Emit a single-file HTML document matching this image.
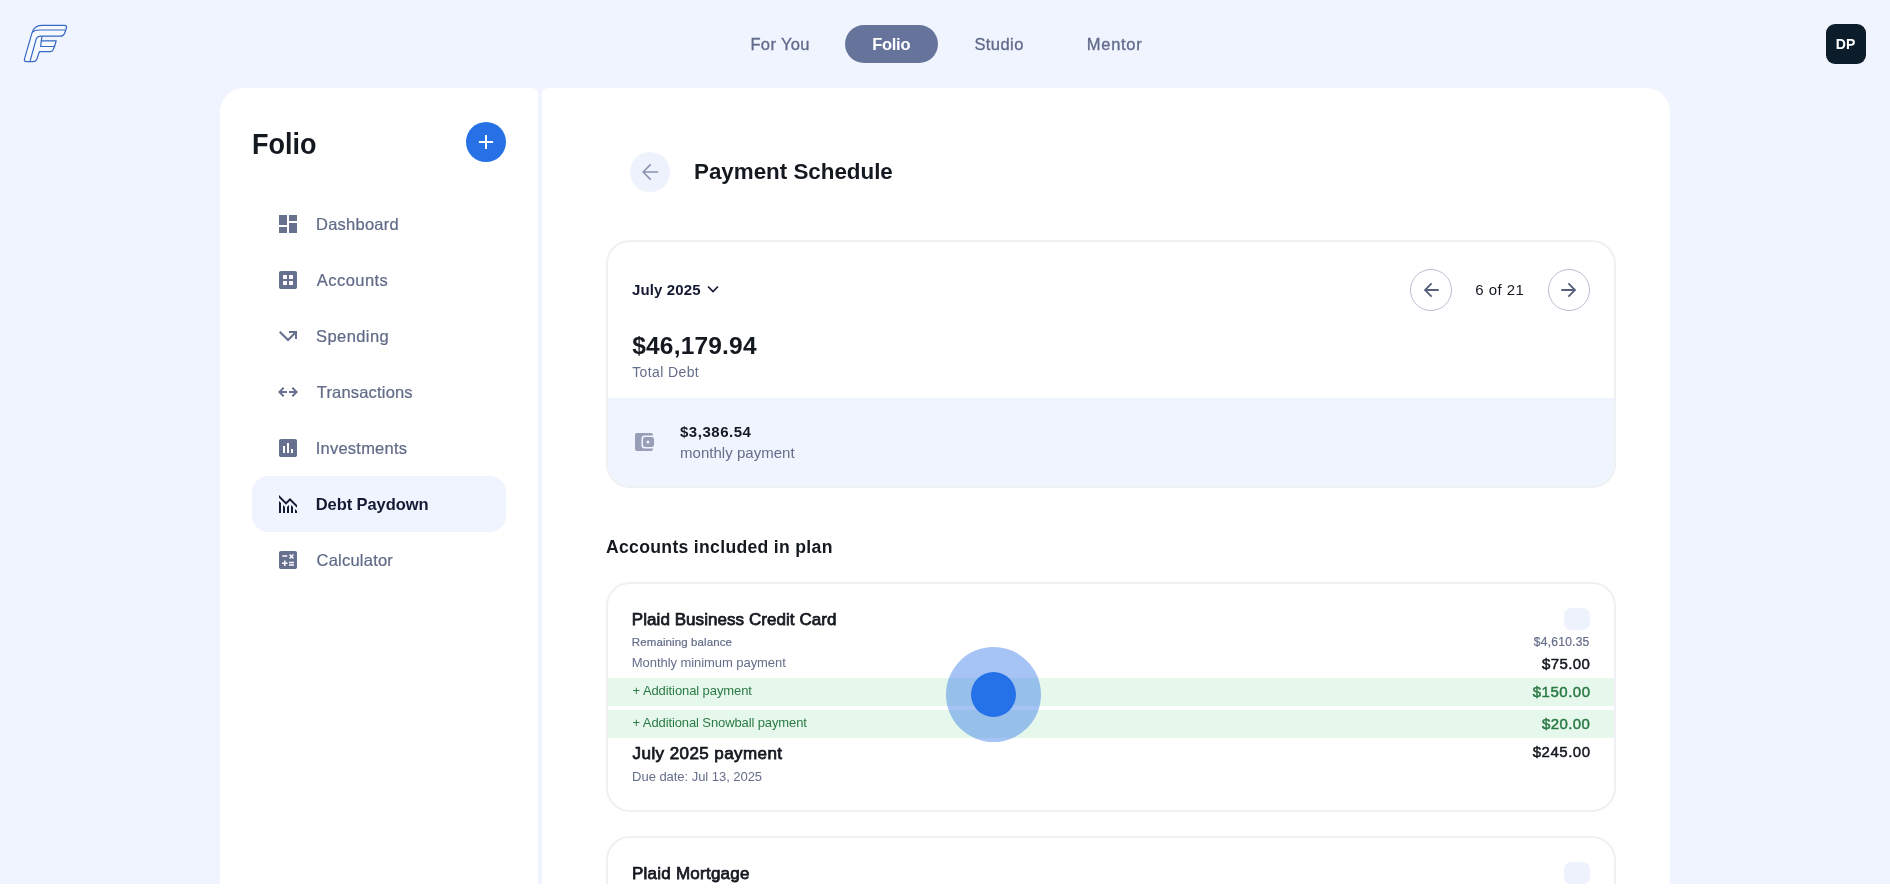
<!DOCTYPE html>
<html lang="en">
<head>
<meta charset="utf-8">
<title>Folio - Payment Schedule</title>
<style>
*{box-sizing:border-box;margin:0;padding:0}
html,body{width:1890px;height:896px;overflow:hidden;background:#fff}
body{font-family:"Liberation Sans",Arial,sans-serif;color:#14181f;position:relative}
#app{position:absolute;left:0;top:0;width:1890px;height:884px;background:#f0f4fe;overflow:hidden;will-change:transform}
.abs{position:absolute;white-space:nowrap;line-height:1}
/* top nav */
.tab{color:#606b8a;-webkit-text-stroke:.32px currentColor}
.tab.b{-webkit-text-stroke:0}
#avatar{position:absolute;left:1826px;top:24px;width:40px;height:40px;border-radius:9px;background:#0b1c2b;color:#fff}
/* panels */
#side{position:absolute;left:220px;top:88px;width:318px;height:820px;background:#fff;border-radius:24px 6px 0 0}
#main{position:absolute;left:542px;top:88px;width:1128px;height:820px;background:#fff;border-radius:6px 24px 0 0}
.nav{position:absolute;left:32px;width:254px;height:56px;border-radius:16px}
.nav.on{background:#f0f4fe}
.nav svg{position:absolute;left:24px;top:16px;width:24px;height:24px;fill:#67708f}
.nav.on svg{fill:#141a33}
.nav span{position:absolute;line-height:1;color:#616b88;white-space:nowrap;-webkit-text-stroke:.22px currentColor}
.nav.on span{color:#141a33;font-weight:700;-webkit-text-stroke:0}
.card{position:absolute;left:64px;width:1010px;border:2px solid #eef0f3;border-radius:24px;background:#fff;overflow:hidden}
.mut{color:#656e8a}
.grn{color:#2c7a45}
.b{font-weight:700}
.sb{font-weight:400;-webkit-text-stroke:.5px currentColor}
.sb3{font-weight:400;-webkit-text-stroke:1.25px currentColor}
.sb2{font-weight:400;-webkit-text-stroke:.75px currentColor}
.md{-webkit-text-stroke:.22px currentColor}
.r{right:24px}
.row{position:absolute;left:0;width:1006px;height:28px;background:#e6f8ec}
</style>
</head>
<body>
<div id="app">
  <!-- logo -->
  <svg class="abs" style="left:0;top:0" width="90" height="80" viewBox="0 0 90 80" fill="none" stroke="#3568c4" stroke-width="1.2" stroke-linejoin="round" stroke-linecap="round">
    <path fill="#f6f9ff" d="M26.6 61.6 Q23.7 61.6 24.5 58.9 L32.1 32.6 Q34.3 25.4 41.6 25.4 L64.4 25.4 Q67.3 25.4 66.4 28 L64.7 33 Q63.6 36.2 60 36.2 L42 36.2 L41.3 40.9 L56.2 40.9 L54.5 46.5 L53 50 Q52.2 51.6 50.4 51.6 L39.4 51.6 L36.9 59 Q35.9 61.6 33 61.6 Z"/>
    <path d="M30 61.3 L36 39.6 Q37 36.2 41.2 36.2"/>
    <path d="M32.5 32.1 Q34.8 30 39.2 30 L65 30"/>
    <path d="M41.3 40.9 L40.6 46.5 L54.5 46.5"/>
  </svg>

  <!-- top tabs -->
  <div class="abs" style="left:845px;top:25px;width:93px;height:38px;border-radius:19px;background:#66749b"></div>
  <div class="abs tab" style="left:750.4px;top:36.4px;font-size:16.5px;letter-spacing:0.37px">For You</div>
  <div class="abs tab b" style="left:872.2px;top:36px;font-size:16.5px;letter-spacing:-0.28px;color:#fff">Folio</div>
  <div class="abs tab" style="left:974.4px;top:36px;font-size:16.5px;letter-spacing:0.44px">Studio</div>
  <div class="abs tab" style="left:1086.8px;top:36.4px;font-size:16.5px;letter-spacing:0.72px">Mentor</div>
  <div id="avatar"><div class="abs b" style="left:9.8px;top:13.1px;font-size:14px;letter-spacing:0.2px">DP</div></div>

  <!-- sidebar -->
  <div id="side">
    <div class="abs b" style="left:32.3px;top:40.6px;font-size:29.3px;color:#14181f;letter-spacing:0px;transform:scaleX(.921);transform-origin:0 0">Folio</div>
    <div class="abs" style="left:246px;top:34px;width:40px;height:40px;border-radius:50%;background:#2771e6">
      <svg width="40" height="40" viewBox="0 0 40 40"><path d="M20 12.900v14.200M12.900 20h14.200" stroke="#fff" stroke-width="2" fill="none"/></svg>
    </div>

    <div class="nav" style="top:108px">
      <svg viewBox="0 0 24 24"><path d="M13 9V3h8v6zM3 13V3h8v10zm10 8V11h8v10zM3 21v-6h8v6z"/></svg>
      <span style="left:64px;top:19.6px;font-size:16.5px;letter-spacing:0.25px">Dashboard</span>
    </div>
    <div class="nav" style="top:164px">
      <svg viewBox="0 0 24 24"><path d="M5 21q-.825 0-1.412-.587T3 19V5q0-.825.588-1.412T5 3h14q.825 0 1.413.588T21 5v14q0 .825-.587 1.413T19 21zm2-4h4v-4H7zm6 0h4v-4h-4zm-6-6h4V7H7zm6 0h4V7h-4z"/></svg>
      <span style="left:64.8px;top:19.8px;font-size:16.5px;letter-spacing:0.45px">Accounts</span>
    </div>
    <div class="nav" style="top:220px">
      <svg viewBox="0 0 24 24"><path d="M3 8.410l9 9 7-7V15h2V7h-8v2h4.590L12 14.590 4.410 7z"/></svg>
      <span style="left:64px;top:19.6px;font-size:16.5px;letter-spacing:0.43px">Spending</span>
    </div>
    <div class="nav" style="top:276px">
      <svg viewBox="0 0 24 24"><path d="m7 17-5-5 5-5 1.4 1.4L5.8 11H11v2H5.8l2.6 2.6zm10 0-1.4-1.4 2.6-2.6H13v-2h5.200l-2.6-2.6L17 7l5 5z"/></svg>
      <span style="left:64.8px;top:20.4px;font-size:16.5px;letter-spacing:0.18px">Transactions</span>
    </div>
    <div class="nav" style="top:332px">
      <svg viewBox="0 0 24 24"><path d="M5 21q-.825 0-1.412-.587T3 19V5q0-.825.588-1.412T5 3h14q.825 0 1.413.588T21 5v14q0 .825-.587 1.413T19 21zm2-4h2v-7H7zm4 0h2V7h-2zm4 0h2v-4h-2z"/></svg>
      <span style="left:63.8px;top:20px;font-size:16.5px;letter-spacing:0.22px">Investments</span>
    </div>
    <div class="nav on" style="top:388px">
      <svg viewBox="0 0 24 24"><path d="M21 21v-2l-2-2v4zM17 21v-6l-2-2v8zM13 21v-8l-2 2.025V21zM9 21v-5.975l-2-2V21zM5 21V11l-2-2v12zM21 15.825V13l-7-7-4 4-7-7v2.825l7 7 4-4z"/></svg>
      <span style="left:63.8px;top:20.4px;font-size:16.5px;letter-spacing:-0.09px">Debt Paydown</span>
    </div>
    <div class="nav" style="top:444px">
      <svg viewBox="0 0 24 24"><path d="M5 21q-.825 0-1.412-.587T3 19V5q0-.825.588-1.412T5 3h14q.825 0 1.413.588T21 5v14q0 .825-.587 1.413T19 21zM6.250 8.700h5V7.200h-5zm6.750 9.050h5v-1.500h-5zm0-2.500h5v-1.500h-5zM8 18h1.500v-2h2v-1.500h-2v-2H8v2H6V16h2zm6.100-7.050 1.400-1.400 1.400 1.400 1.050-1.050-1.400-1.450 1.400-1.400L16.900 6l-1.400 1.400L14.100 6l-1.050 1.050 1.400 1.400-1.400 1.450z"/></svg>
      <span style="left:64.5px;top:20.1px;font-size:16.5px;letter-spacing:0.23px">Calculator</span>
    </div>
  </div>

  <!-- main -->
  <div id="main">
    <div class="abs" style="left:88px;top:64px;width:40px;height:40px;border-radius:50%;background:#eef2fc">
      <svg width="40" height="40" viewBox="0 0 40 40"><path d="M28.200 20H13.200M20.700 12.400 13.100 20l7.600 7.600" stroke="#8b93b0" stroke-width="1.5" fill="none"/></svg>
    </div>
    <div class="abs b" style="left:152px;top:73px;font-size:22.4px;letter-spacing:-0.02px">Payment Schedule</div>

    <div class="card" style="top:152px;height:248px">
      <div class="abs b" style="left:24px;top:40px;font-size:15px;color:#141a33;letter-spacing:0.12px">July 2025</div>
      <svg class="abs" style="left:95px;top:37px" width="20" height="20" viewBox="0 0 20 20"><path d="M5 7.500 10 12.500 15 7.500" stroke="#141a33" stroke-width="1.7" fill="none"/></svg>
      <div class="abs b" style="left:24.2px;top:91.8px;font-size:24.5px;letter-spacing:0.19px">$46,179.94</div>
      <div class="abs mut" style="left:24.2px;top:123.4px;font-size:14px;letter-spacing:0.39px">Total Debt</div>

      <div class="abs" style="left:802px;top:27px;width:42px;height:42px;border-radius:50%;border:1px solid #b9c0d2">
        <svg width="40" height="40" viewBox="0 0 40 40"><path d="M27.700 20H14M20.600 13.400 14 20l6.600 6.600" stroke="#56607d" stroke-width="1.8" fill="none"/></svg>
      </div>
      <div class="abs" style="left:867.2px;top:40.4px;font-size:15px;color:#14181f;letter-spacing:0.47px">6 of 21</div>
      <div class="abs" style="left:940px;top:27px;width:42px;height:42px;border-radius:50%;border:1px solid #b9c0d2">
        <svg width="40" height="40" viewBox="0 0 40 40"><path d="M12.300 20H26M19.400 13.400 26 20l-6.600 6.600" stroke="#56607d" stroke-width="1.8" fill="none"/></svg>
      </div>

      <div class="abs" style="left:0;top:156px;width:1006px;height:90px;background:#f0f4fe">
        <svg class="abs" style="left:24px;top:32px" width="24" height="24" viewBox="0 0 24 24" fill="#989eb7"><path fill-rule="evenodd" d="M5 3h14q2 0 2 2v.500h-8.500q-3 0-3 3v7q0 3 3 3H21v.500q0 2-2 2H5q-2 0-2-2V5q0-2 2-2zM13.200 7h6.600q2.200 0 2.200 2.200v5.600q0 2.200-2.200 2.200h-6.600q-2.200 0-2.200-2.200V9.200q0-2.200 2.200-2.200zM16 10.500a1.500 1.500 0 1 0 0 3 1.500 1.500 0 1 0 0-3z"/></svg>
        <div class="abs b" style="left:72px;top:25.6px;font-size:15px;letter-spacing:0.52px">$3,386.54</div>
        <div class="abs mut" style="left:72px;top:46.6px;font-size:15px;letter-spacing:0.03px">monthly payment</div>
      </div>
    </div>

    <div class="abs b" style="left:64px;top:450.5px;font-size:17.6px;letter-spacing:0.31px">Accounts included in plan</div>

    <div class="card" style="top:494px;height:230px">
      <div class="abs sb2" style="left:23.8px;top:27px;font-size:17px;letter-spacing:0.06px">Plaid Business Credit Card</div>
      <div class="abs" style="right:24px;top:24px;width:26px;height:22px;border-radius:7px;background:#eef2fd"></div>
      <div class="abs mut md" style="left:23.8px;top:53px;font-size:11.5px;letter-spacing:0.11px">Remaining balance</div>
      <div class="abs mut md" style="right:24.5px;top:52.2px;font-size:12px;letter-spacing:0.25px">$4,610.35</div>
      <div class="abs mut" style="left:23.8px;top:72px;font-size:13px;letter-spacing:-0.06px">Monthly minimum payment</div>
      <div class="abs sb" style="right:23.6px;top:71.6px;font-size:15px;letter-spacing:0.44px">$75.00</div>
      <div class="row" style="top:94px"></div>
      <div class="abs grn" style="left:24.6px;top:99.6px;font-size:13px;letter-spacing:-0.09px">+ Additional payment</div>
      <div class="abs grn sb" style="right:23.5px;top:100px;font-size:15px;letter-spacing:0.5px">$150.00</div>
      <div class="row" style="top:126px"></div>
      <div class="abs grn" style="left:24.6px;top:131.6px;font-size:13px;letter-spacing:-0.11px">+ Additional Snowball payment</div>
      <div class="abs grn sb" style="right:23.6px;top:132px;font-size:15px;letter-spacing:0.44px">$20.00</div>
      <div class="abs sb2" style="left:24.6px;top:161px;font-size:17px;letter-spacing:0.42px">July 2025 payment</div>
      <div class="abs sb" style="right:23.5px;top:159.6px;font-size:15px;letter-spacing:0.5px">$245.00</div>
      <div class="abs mut" style="left:24.1px;top:186.4px;font-size:13px;letter-spacing:-0.04px">Due date: Jul 13, 2025</div>
    </div>

    <div class="card" style="top:748px;height:230px">
      <div class="abs sb2" style="left:24px;top:27px;font-size:17px;letter-spacing:0.24px">Plaid Mortgage</div>
      <div class="abs" style="right:24px;top:24px;width:26px;height:22px;border-radius:7px;background:#eef2fd"></div>
    </div>
  </div>

  <!-- click ripple -->
  <div class="abs" style="left:946px;top:647px;width:95px;height:95px;border-radius:50%;background:rgba(40,113,230,.42)"></div>
  <div class="abs" style="left:971px;top:672px;width:45px;height:45px;border-radius:50%;background:#2571e8"></div>
</div>
</body>
</html>
